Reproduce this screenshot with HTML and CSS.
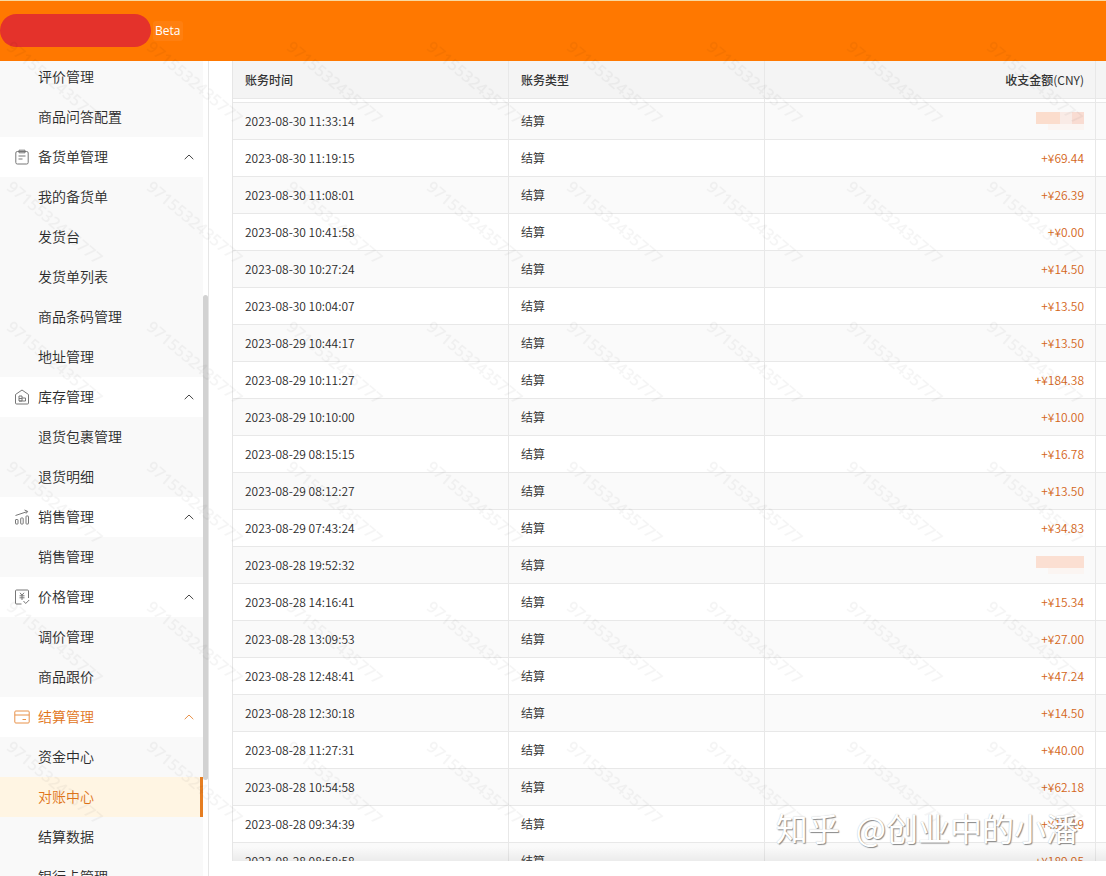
FILE: index.html
```html
<!DOCTYPE html>
<html lang="zh-CN">
<head>
<meta charset="utf-8">
<title>对账中心</title>
<link rel="stylesheet" href="styles.css">
</head>
<body>
<div class="app">
  <header class="topbar">
    <span class="brand"></span>
    <span class="beta">Beta</span>
  </header>
  <div class="body">
    <aside class="sidebar">
      <nav class="menu">
        <a class="item" href="#">评价管理</a>
        <a class="item" href="#">商品问答配置</a>
        <button class="group" type="button">
          <svg class="icon" viewBox="0 0 16 16"><rect x="1.8" y="2.5" width="12.4" height="12.5" rx="1.5"/><path d="M5 1.2h6v2.6H5zM4.500 7h7M4.500 10h4"/></svg>
          <span class="label">备货单管理</span>
          <svg class="caret" viewBox="0 0 10 6"><path d="M.7 5.2L5 1l4.300 4.200"/></svg>
        </button>
        <a class="item" href="#">我的备货单</a>
        <a class="item" href="#">发货台</a>
        <a class="item" href="#">发货单列表</a>
        <a class="item" href="#">商品条码管理</a>
        <a class="item" href="#">地址管理</a>
        <button class="group" type="button">
          <svg class="icon" viewBox="0 0 16 16"><path d="M1.500 5.500L8 1l6.500 4.500V14a1 1 0 0 1-1 1h-11a1 1 0 0 1-1-1zM5 7h3v5H5zM8 9h3.500v3H5M5 9.500h3"/></svg>
          <span class="label">库存管理</span>
          <svg class="caret" viewBox="0 0 10 6"><path d="M.7 5.2L5 1l4.300 4.200"/></svg>
        </button>
        <a class="item" href="#">退货包裹管理</a>
        <a class="item" href="#">退货明细</a>
        <button class="group" type="button">
          <svg class="icon" viewBox="0 0 16 16"><rect x="1.500" y="10.500" width="2.500" height="4.500" rx=".5"/><rect x="6.700" y="9" width="2.500" height="6" rx=".5"/><rect x="12" y="7" width="2.500" height="8" rx=".5"/><path d="M1.500 6.500l12-4M10.500 1l3.200 1.400-1.700 2.200"/></svg>
          <span class="label">销售管理</span>
          <svg class="caret" viewBox="0 0 10 6"><path d="M.7 5.2L5 1l4.300 4.200"/></svg>
        </button>
        <a class="item" href="#">销售管理</a>
        <button class="group" type="button">
          <svg class="icon" viewBox="0 0 16 16"><path d="M7.500 15H2.500a1 1 0 0 1-1-1V2a1 1 0 0 1 1-1h11a1 1 0 0 1 1 1v7M9.500 12l2.200 2.500 3.500-3.500M6 3.800l2 2.400 2-2.400M5.500 6.800h5M5.500 8.800h5M8 6.200V11"/></svg>
          <span class="label">价格管理</span>
          <svg class="caret" viewBox="0 0 10 6"><path d="M.7 5.2L5 1l4.300 4.200"/></svg>
        </button>
        <a class="item" href="#">调价管理</a>
        <a class="item" href="#">商品跟价</a>
        <button class="group current" type="button">
          <svg class="icon" viewBox="0 0 16 16"><rect x=".8" y="2" width="14.400" height="12" rx="1"/><path d="M.8 6h14.400M8.500 10.500H12"/></svg>
          <span class="label">结算管理</span>
          <svg class="caret" viewBox="0 0 10 6"><path d="M.7 5.2L5 1l4.300 4.200"/></svg>
        </button>
        <a class="item" href="#">资金中心</a>
        <a class="item active" href="#">对账中心</a>
        <a class="item" href="#">结算数据</a>
        <a class="item" href="#">银行卡管理</a>
      </nav>
      <span class="thumb"></span>
    </aside>
    <main class="content">
      <div class="tablebox">
        <table class="ledger">
          <colgroup><col class="c-time"><col class="c-type"><col><col class="c-more"></colgroup>
          <thead>
            <tr><th>账务时间</th><th>账务类型</th><th class="amount">收支金额<span class="unit">(CNY)</span></th><th></th></tr>
          </thead>
          <tbody>
            <tr class="gap"><td></td><td></td><td></td><td></td></tr>
            <tr><td>2023-08-30 11:33:14</td><td>结算</td><td class="amount"><span class="mask split"></span></td><td></td></tr>
            <tr><td>2023-08-30 11:19:15</td><td>结算</td><td class="amount">+¥69.44</td><td></td></tr>
            <tr><td>2023-08-30 11:08:01</td><td>结算</td><td class="amount">+¥26.39</td><td></td></tr>
            <tr><td>2023-08-30 10:41:58</td><td>结算</td><td class="amount">+¥0.00</td><td></td></tr>
            <tr><td>2023-08-30 10:27:24</td><td>结算</td><td class="amount">+¥14.50</td><td></td></tr>
            <tr><td>2023-08-30 10:04:07</td><td>结算</td><td class="amount">+¥13.50</td><td></td></tr>
            <tr><td>2023-08-29 10:44:17</td><td>结算</td><td class="amount">+¥13.50</td><td></td></tr>
            <tr><td>2023-08-29 10:11:27</td><td>结算</td><td class="amount">+¥184.38</td><td></td></tr>
            <tr><td>2023-08-29 10:10:00</td><td>结算</td><td class="amount">+¥10.00</td><td></td></tr>
            <tr><td>2023-08-29 08:15:15</td><td>结算</td><td class="amount">+¥16.78</td><td></td></tr>
            <tr><td>2023-08-29 08:12:27</td><td>结算</td><td class="amount">+¥13.50</td><td></td></tr>
            <tr><td>2023-08-29 07:43:24</td><td>结算</td><td class="amount">+¥34.83</td><td></td></tr>
            <tr><td>2023-08-28 19:52:32</td><td>结算</td><td class="amount"><span class="mask"></span></td><td></td></tr>
            <tr><td>2023-08-28 14:16:41</td><td>结算</td><td class="amount">+¥15.34</td><td></td></tr>
            <tr><td>2023-08-28 13:09:53</td><td>结算</td><td class="amount">+¥27.00</td><td></td></tr>
            <tr><td>2023-08-28 12:48:41</td><td>结算</td><td class="amount">+¥47.24</td><td></td></tr>
            <tr><td>2023-08-28 12:30:18</td><td>结算</td><td class="amount">+¥14.50</td><td></td></tr>
            <tr><td>2023-08-28 11:27:31</td><td>结算</td><td class="amount">+¥40.00</td><td></td></tr>
            <tr><td>2023-08-28 10:54:58</td><td>结算</td><td class="amount">+¥62.18</td><td></td></tr>
            <tr><td>2023-08-28 09:34:39</td><td>结算</td><td class="amount">+¥15.19</td><td></td></tr>
            <tr><td>2023-08-28 08:58:58</td><td>结算</td><td class="amount">+¥189.95</td><td></td></tr>
          </tbody>
        </table>
      </div>
    </main>
  </div>
  <svg class="watermark" aria-hidden="true">
    <defs>
      <pattern id="wm" y="28" width="140" height="140" patternUnits="userSpaceOnUse">
        <text class="wm-text" transform="translate(5 15) rotate(40)" x="4" y="4">9715532435777</text>
      </pattern>
    </defs>
    <rect width="100%" height="100%" fill="url(#wm)"/>
  </svg>
  <div class="credit"><span>知乎</span><span>@创业中的小潘</span></div>
</div>
</body>
</html>
```
FILE: styles.css
```css
* { box-sizing: border-box; }
body {
  margin: 0;
  background: #fff;
  color: #333;
  font: 350 12px/20px "Noto Sans CJK SC", sans-serif;
}
.app {
  position: relative;
  display: flex;
  flex-direction: column;
  height: 100vh;
  overflow: hidden;
}
.topbar {
  display: flex;
  flex: none;
  align-items: center;
  gap: 2px;
  height: 61px;
  padding-bottom: 1px;
  background: #ff7800;
  border-top: 1px solid #f8d9a0;
}
.brand {
  width: 151px;
  height: 33px;
  border-radius: 17px;
  background: #e4322b;
}
.beta {
  padding: 0 3px 0 2px;
  border-radius: 3px;
  background: rgba(255, 255, 255, .06);
  color: #fff;
  font-family: "Open Sans", sans-serif;
  font-weight: 400;
}
.body {
  display: flex;
  flex: 1;
  min-height: 0;
}
.sidebar {
  position: relative;
  flex: none;
  width: 209px;
  overflow: hidden;
  border-right: 1px solid #e6e6e6;
}
.menu {
  display: flex;
  flex-direction: column;
  width: 203px;
  margin-top: -4px;
  font-size: 14px;
}
.item, .group {
  display: flex;
  flex: none;
  align-items: center;
  height: 40px;
  padding: 0 9px 2px 38px;
  color: #2b2b2b;
  text-decoration: none;
}
.item { background: #f9f9f9; }
.group {
  gap: 8px;
  padding: 0 9px 0 14px;
  border: 0;
  background: #fff;
  font: inherit;
  text-align: left;
}
.label { flex: 1; padding-bottom: 2px; }
.current, .item.active { color: #e1751a; }
.item.active {
  background: #fff5e3;
  border-right: 3px solid #e67e22;
}
.icon, .caret {
  fill: none;
  stroke: #777;
  stroke-width: 1;
}
.icon { width: 16px; height: 16px; }
.caret { width: 10px; height: 6px; stroke: #444; }
.current .icon, .current .caret { stroke: #e8924a; }
.thumb {
  position: absolute;
  right: 0;
  top: 234px;
  width: 5px;
  height: 485px;
  border-radius: 3px;
  background: #d2d2d2;
}
.content {
  flex: 1;
  min-width: 0;
  padding: 0 0 15px 23px;
}
.tablebox {
  position: relative;
  height: 100%;
  overflow: hidden;
  border-left: 1px solid #e6e6e6;
}
.tablebox::after {
  content: "";
  position: absolute;
  inset: auto 0 0;
  height: 14px;
  background: linear-gradient(rgba(0, 0, 0, 0), rgba(0, 0, 0, .06));
}
.ledger {
  width: 100%;
  table-layout: fixed;
  border-collapse: separate;
  border-spacing: 0;
}
.c-time { width: 276px; }
.c-type { width: 256px; }
.c-more { width: 10px; }
.ledger th, .ledger td {
  height: 37px;
  padding: 0 12px;
  border-right: 1px solid #e8e8e8;
  border-bottom: 1px solid #e8e8e8;
  text-align: left;
}
.ledger td { color: #2b2b2b; }
.ledger th {
  height: 38px;
  background: #f4f4f4;
  font-weight: 500;
}
.ledger th:last-child, .ledger td:last-child { padding: 0; border-right: 0; }
.unit { font-weight: 400; }
.ledger tbody tr:nth-child(even) { background: #fafafa; }
.ledger .gap td { height: 4px; padding: 0; }
.ledger .amount { padding-right: 11px; text-align: right; }
.ledger td.amount { color: #d4661a; }
.mask {
  display: block;
  width: 48px;
  height: 18px;
  margin-left: auto;
  background:
    linear-gradient(#fbdfd2, #fbdfd2) 0 0 / 48px 12px no-repeat,
    linear-gradient(#fbf5f2, #fbf5f2) 12px 12px / 36px 6px no-repeat;
}
.mask.split {
  background:
    linear-gradient(90deg, #fbddcd 24px, #f9ebe6 24px, #f9ebe6 36px, #f9dcd2 36px) 0 0 / 48px 12px no-repeat,
    linear-gradient(#fbf5f2, #fbf5f2) 12px 12px / 36px 6px no-repeat;
}
.watermark {
  position: absolute;
  inset: 0;
  width: 100%;
  height: 100%;
  pointer-events: none;
}
.wm-text {
  fill: rgba(0, 0, 0, .04);
  font: 600 16px "Open Sans", sans-serif;
}
.credit {
  position: absolute;
  right: 28px;
  bottom: 27px;
  display: flex;
  gap: 16px;
  color: #fff;
  font-size: 32px;
  font-weight: 400;
  line-height: 44px;
  white-space: nowrap;
  text-shadow: 1px 1px 1px #888, 0 0 1px #bbb;
}
```
